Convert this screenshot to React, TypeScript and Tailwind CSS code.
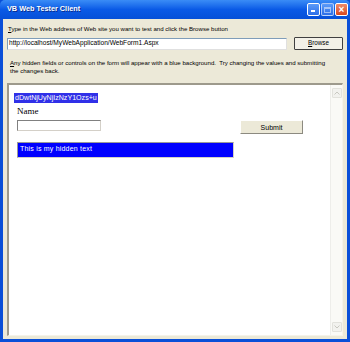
import React from "react";

export default function App() {
  const tahoma = { fontFamily: '"Liberation Sans", Arial, sans-serif' };
  return (
    <div className="w-[350px] h-[342px] flex flex-col bg-[#0a4fd8] overflow-hidden" style={{ fontFamily: '"Liberation Sans", Arial, sans-serif' }}>
      {/* Title bar */}
      <div className="h-[19px] flex items-center pl-[7px] pr-[2px] bg-gradient-to-b from-[#3a8cf6] via-[#0a5ae6] to-[#0650d8] rounded-t-[5px]">
        <span className="text-white font-bold text-[7.3px] flex-1" style={{ fontFamily: '"Liberation Sans", sans-serif', textShadow: "1px 1px 0 #0b2d8c" }}>
          VB Web Tester Client
        </span>
        <div className="flex gap-[1px] items-center">
          <div className="w-[13px] h-[13px] rounded-[2px] border border-white bg-gradient-to-b from-[#5c9bf8] to-[#2b6ee8] flex items-end justify-start pl-[3px] pb-[3px]">
            <div className="w-[4px] h-[2px] bg-white" />
          </div>
          <div className="w-[13px] h-[13px] rounded-[2px] border border-white/60 bg-gradient-to-b from-[#5c9bf8] to-[#2b6ee8] flex items-center justify-center">
            <div className="w-[7px] h-[6px] border border-white/50 border-t-2" />
          </div>
          <div className="w-[13px] h-[13px] rounded-[2px] border border-white bg-gradient-to-b from-[#ee8a68] to-[#d8461c] flex items-center justify-center text-white text-[10px] font-bold leading-none">
            ×
          </div>
        </div>
      </div>
      {/* Body */}
      <div className="flex-1 mx-[3px] mb-[3px] bg-[#ece9d8] flex flex-col px-[4px] pt-[5px] pb-[3px]">
        <div className="text-[6.1px] text-black leading-[9px] pl-[1px] whitespace-nowrap" style={tahoma}>
          <span className="underline">T</span>ype in the Web address of Web site you want to test and click the Browse button
        </div>
        <div className="flex items-center mt-[4px]">
          <div className="w-[280px] h-[12px] bg-white border border-t-[#7f9db9] border-l-[#7f9db9] border-b-[#e0e0e0] border-r-[#e0e0e0] flex items-center px-[1px]">
            <span className="text-[6.6px] text-black leading-none" style={tahoma}>http://localhost/MyWebApplication/WebForm1.Aspx</span>
          </div>
          <div className="ml-[7px] w-[49px] h-[13px] border border-[#404040] bg-[#f3f1e8] rounded-[1px] flex items-center justify-center">
            <span className="text-[6.3px] text-black leading-none" style={tahoma}>
              <span className="underline">B</span>rowse
            </span>
          </div>
        </div>
        <div className="text-[6.1px] text-black leading-[8px] mt-[9px] pl-[3px] whitespace-nowrap" style={tahoma}>
          <span className="underline">A</span>ny hidden fields or controls on the form will appear with a blue background.&nbsp; Try changing the values and submitting
          <br />
          the changes back.
        </div>
        {/* Browser panel */}
        <div className="flex-1 mt-[8px] flex bg-white border-t-[2px] border-l-[2px] border-t-[#9d9a8c] border-l-[#9d9a8c] border-b border-r border-b-[#f5f3ea] border-r-[#f5f3ea]">
          <div className="flex-1 flex flex-col pl-[5px] pt-[8px]">
            <div className="flex">
              <span className="bg-[#3030e8] text-white text-[7.1px] leading-[10px] px-[1px] block" style={tahoma}>dDwtNjUyNjIzNzY1Ozs+u</span>
            </div>
            <div className="flex items-start">
              <div className="pl-[3px] flex flex-col">
                <span className="text-[9px] leading-[11px] text-black mt-[3px]" style={{ fontFamily: '"Liberation Serif", serif' }}>Name</span>
                <div className="w-[84px] h-[11px] mt-[3px] bg-white border border-t-[#808080] border-l-[#808080] border-b-[#d4d0c8] border-r-[#d4d0c8]" />
              </div>
              <div className="ml-[139px] mt-[17px] w-[63px] h-[14px] bg-[#ece9d8] border border-t-white border-l-white border-b-[#8c8a80] border-r-[#8c8a80] flex items-center justify-center">
                <span className="text-[7px] text-black leading-none" style={{ fontFamily: '"Liberation Sans", sans-serif' }}>Submit</span>
              </div>
            </div>
            <div className="ml-[3px] mt-[8px] w-[217px] h-[16px] bg-[#0000ff] border border-t-[#9a9a9a] border-l-[#9a9a9a] border-b-[#d4d0c8] border-r-[#d4d0c8] flex items-start pt-[2px] pl-[2px]">
              <span className="text-white text-[7px] leading-none tracking-[0.2px]" style={{ fontFamily: '"Liberation Sans", sans-serif' }}>This is my hidden text</span>
            </div>
          </div>
          {/* Scrollbar */}
          <div className="w-[12px] bg-[#fafaf6] border-l border-[#eeeeea] flex flex-col justify-between items-center py-[3px]">
            <div className="w-[10px] h-[10px] bg-[#f2f2ee] border border-[#e2e2dc] rounded-[1px] flex items-center justify-center">
              <svg width="6" height="4" viewBox="0 0 6 4"><path d="M0.5 3.5 L3 1 L5.5 3.5" stroke="#c8c8c0" strokeWidth="1" fill="none" /></svg>
            </div>
            <div className="w-[10px] h-[10px] bg-[#f2f2ee] border border-[#e2e2dc] rounded-[1px] flex items-center justify-center">
              <svg width="6" height="4" viewBox="0 0 6 4"><path d="M0.5 0.5 L3 3 L5.5 0.5" stroke="#c8c8c0" strokeWidth="1" fill="none" /></svg>
            </div>
          </div>
        </div>
      </div>
    </div>
  );
}
